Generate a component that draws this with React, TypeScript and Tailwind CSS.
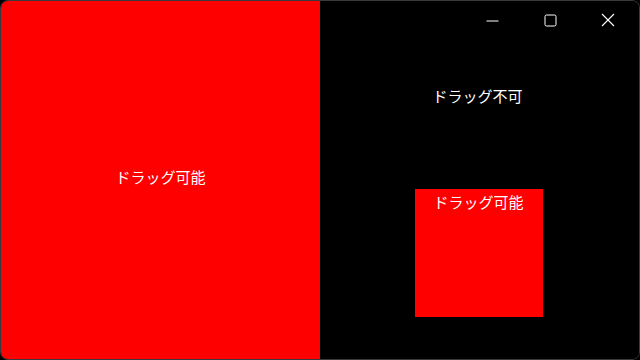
import React from 'react';

const font = { fontFamily: '"Noto Sans CJK JP", "Noto Sans", sans-serif' };

const CaptionButtons: React.FC = () => (
  <div className="flex justify-end h-[38px]">
    <button className="w-[58px] h-full flex items-center justify-center text-white">
      <svg width="13" height="13" viewBox="0 0 13 13">
        <line x1="0.5" y1="7" x2="12.5" y2="7" stroke="#fff" strokeWidth="1" />
      </svg>
    </button>
    <button className="w-[58px] h-full flex items-center justify-center">
      <svg width="13" height="13" viewBox="0 0 13 13">
        <rect x="1" y="1" width="11" height="11" rx="1.5" fill="none" stroke="#fff" strokeWidth="1" />
      </svg>
    </button>
    <button className="w-[58px] h-full flex items-center justify-center mr-[2px]">
      <svg width="14" height="14" viewBox="0 0 14 14">
        <path d="M1 1 L13 13 M13 1 L1 13" stroke="#fff" strokeWidth="1.1" />
      </svg>
    </button>
  </div>
);

export default function App() {
  return (
    <div className="w-[640px] h-[360px] bg-black" style={font}>
      <div className="w-full h-full rounded-[8px] border border-[#3a3a3a] overflow-hidden grid grid-cols-[319px_1fr]">
        {/* Draggable area */}
        <div className="bg-[#ff0000] flex items-center justify-center">
          <span className="text-white text-[15px] leading-[22px] pb-[6px]">ドラッグ可能</span>
        </div>

        {/* Right pane */}
        <div className="bg-black flex flex-col">
          <CaptionButtons />
          <div className="flex justify-center mt-[46px]">
            <span className="text-white text-[15px] leading-[22px] ml-[-4px]">ドラッグ不可</span>
          </div>
          <div className="flex justify-center mt-[82px]">
            <div className="w-[128px] h-[128px] bg-[#ff0000] flex justify-center ml-[-2px]">
              <span className="text-white text-[15px] leading-[22px] mt-[2px]">ドラッグ可能</span>
            </div>
          </div>
        </div>
      </div>
    </div>
  );
}
